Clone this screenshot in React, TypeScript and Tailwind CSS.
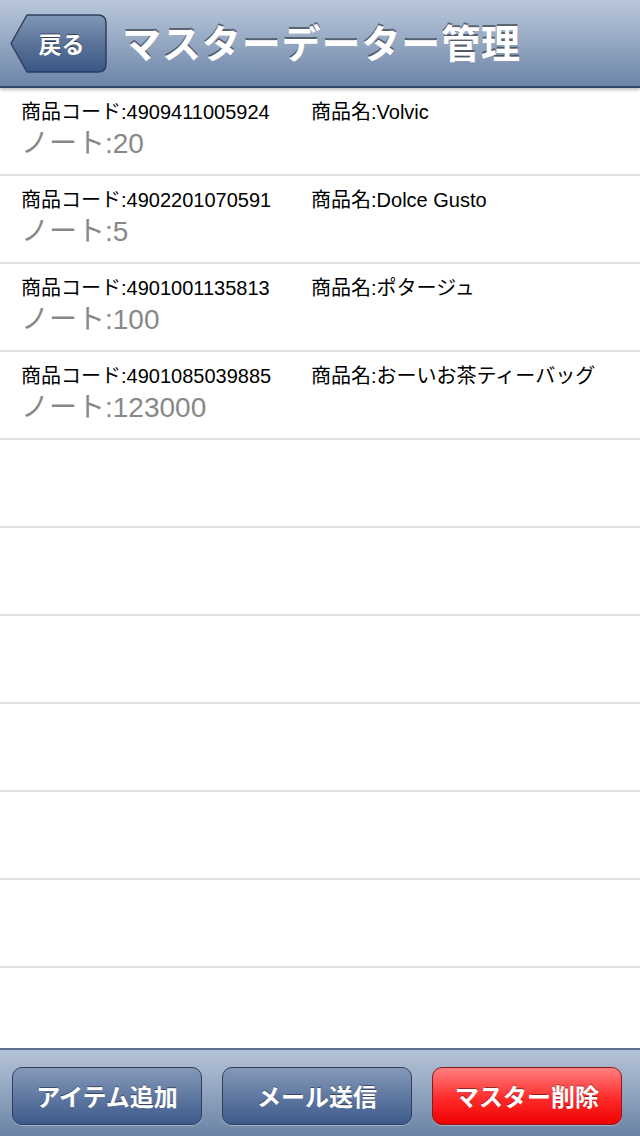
import React from "react";

const rows = [
  { code: "4909411005924", name: "Volvic", note: "20" },
  { code: "4902201070591", name: "Dolce Gusto", note: "5" },
  { code: "4901001135813", name: "ポタージュ", note: "100" },
  { code: "4901085039885", name: "おーいお茶ティーバッグ", note: "123000" },
];

const font = "font-['Liberation_Sans','Noto_Sans_CJK_JP',sans-serif]";
const boldFont = "font-['Noto_Sans_CJK_JP','Liberation_Sans',sans-serif]";

function BackButton() {
  return (
    <div className="relative w-[97px] h-[59px] shrink-0">
      <svg className="absolute inset-0" width="97" height="59" viewBox="0 0 97 59">
        <defs>
          <linearGradient id="bb" x1="0" y1="0" x2="0" y2="1">
            <stop offset="0" stopColor="#8298b9" />
            <stop offset="0.5" stopColor="#5b7399" />
            <stop offset="1" stopColor="#3a5685" />
          </linearGradient>
        </defs>
        <path
          d="M17 1 L88 1 Q96 1 96 9 L96 50 Q96 58 88 58 L17 58 L1 29.5 Z"
          fill="url(#bb)"
          stroke="#2e3f5d"
          strokeWidth="1.5"
          strokeLinejoin="round"
        />
      </svg>
      <span
        className={`absolute inset-0 flex items-center justify-center pl-[6px] text-[23px] font-bold text-white ${boldFont} [text-shadow:0_-1px_0_rgba(0,0,0,0.5)]`}
      >
        戻る
      </span>
    </div>
  );
}

function ToolButton({ label, red }: { label: string; red?: boolean }) {
  return (
    <div
      className={`w-[190px] h-[58px] rounded-[10px] border flex items-center justify-center text-[24px] font-bold text-white ${boldFont} [text-shadow:0_-1px_0_rgba(0,0,0,0.45)] ${
        red
          ? "border-[#8a1a1a] bg-[linear-gradient(to_bottom,#ff8080,#ff2a2a_55%,#f00000)]"
          : "border-[#2e3f5d] bg-[linear-gradient(to_bottom,#8599b8,#5d76a0_55%,#3d5a89)]"
      } shadow-[0_1px_0_rgba(255,255,255,0.35)]`}
    >
      {label}
    </div>
  );
}

export default function App() {
  return (
    <div className={`w-[640px] h-[1136px] flex flex-col bg-white overflow-hidden ${font}`}>
      <div className="relative h-[88px] shrink-0 flex items-center pl-[10px] gap-[15px] bg-[linear-gradient(to_bottom,#bac8db,#94a7c2_50%,#6c84a7)] border-b-2 border-[#34486a] shadow-[0_2px_3px_rgba(0,0,0,0.25)] z-10">
        <BackButton />
        <span
          className={`text-[39px] font-bold text-white ${boldFont} [text-shadow:0_-2px_0_rgba(0,0,0,0.45)] tracking-[0.9px] leading-none pb-[4px]`}
        >
          マスターデーター管理
        </span>
      </div>

      <div className="flex-1 overflow-hidden">
        {Array.from({ length: 11 }).map((_, i) => {
          const r = rows[i];
          return (
            <div key={i} className="h-[88px] border-b-2 border-[#e0e0e0] pl-[21px] pt-[11px]">
              {r && (
                <>
                  <div className="flex text-[20px] text-black leading-[26px] h-[26px]">
                    <span className="w-[290px]">商品コード:{r.code}</span>
                    <span>商品名:{r.name}</span>
                  </div>
                  <div className="text-[28px] text-[#888888] leading-[34px] mt-[2px]">
                    ノート:{r.note}
                  </div>
                </>
              )}
            </div>
          );
        })}
      </div>

      <div className="h-[88px] shrink-0 flex items-center gap-[20px] px-[12px] pt-[6px] bg-[linear-gradient(to_bottom,#b4c2d6,#91a4bf_50%,#6a82a5)] border-t-2 border-[#5c6f8c]">
        <ToolButton label="アイテム追加" />
        <ToolButton label="メール送信" />
        <ToolButton label="マスター削除" red />
      </div>
    </div>
  );
}
